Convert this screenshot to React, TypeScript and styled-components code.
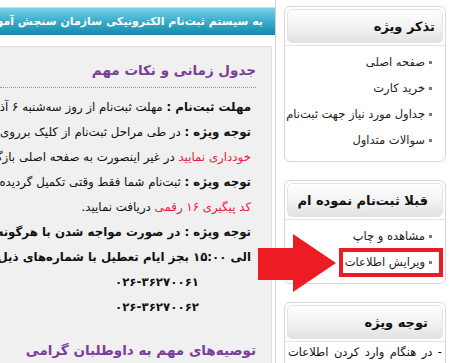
import React from 'react'
import { styled, createGlobalStyle } from 'styled-components'

const GlobalStyle = createGlobalStyle`
    html, body {
        margin: 0;
        padding: 0;
        background: #ffffff;
        overflow: hidden;
    }
    body {
        font-family: 'DejaVu Sans', sans-serif;
        color: #111;
    }
`

const Page = styled.div`
    position: relative;
    display: flex;
    align-items: flex-start;
    gap: 8px;
    width: 452px;
    height: 363px;
    overflow: hidden;
`

const MainColumn = styled.div`
    box-sizing: border-box;
    width: 276px;
    height: 363px;
    padding-top: 7px;
    border-right: 1px solid #d2d2d2;
    display: flex;
    flex-direction: column;
`

const WelcomeBar = styled.div`
    height: 28px;
    box-sizing: border-box;
    border-top: 1px solid #c9dfe6;
    background: linear-gradient(to bottom, #7ad2e6 0%, #3fb0cf 45%, #1588a8 100%);
    color: #ffffff;
    font-weight: bold;
    font-size: 11px;
    line-height: 27px;
    padding-right: 12px;
    direction: rtl;
    white-space: nowrap;
    overflow: hidden;
`

const ContentPanel = styled.div`
    flex: 1;
    margin-top: 11px;
    margin-right: 3px;
    background: #f0f0f0;
    border: 1px solid #dedede;
    border-left: none;
    border-bottom: none;
    padding: 13px 15px 0 0;
    direction: rtl;
    overflow: hidden;
`

const SectionTitle = styled.div<{ $divider?: boolean }>`
    color: #7b3d9b;
    font-weight: bold;
    font-size: 13.5px;
    line-height: 20px;
    white-space: nowrap;
    padding-bottom: ${p => (p.$divider ? '7px' : '0')};
    border-bottom: ${p => (p.$divider ? '1px dotted #9a9a9a' : 'none')};
`

const NoteList = styled.div`
    margin-top: 7px;
    padding-right: 5px;
`

const NoteLine = styled.div<{ $center?: boolean; $bold?: boolean }>`
    font-size: 11.8px;
    line-height: 25px;
    white-space: nowrap;
    color: #111;
    font-weight: ${p => (p.$bold ? 'bold' : 'normal')};
    text-align: ${p => (p.$center ? 'center' : 'right')};
    margin-left: ${p => (p.$center ? '63px' : '0')};
    b {
        font-weight: bold;
    }
`

const Red = styled.span`
    color: #ef1a3a;
`

const Spacer = styled.div`
    height: 20px;
`

const Sidebar = styled.div`
    width: 162px;
    padding-top: 6px;
    display: flex;
    flex-direction: column;
    gap: 18px;
`

const SideBox = styled.div`
    box-sizing: border-box;
    border: 1px solid #d8d8d8;
    border-radius: 6px;
    padding: 2px 2px 0 2px;
    background: #ffffff;
    direction: rtl;
`

const SideHeader = styled.div<{ $inset: number }>`
    height: 34px;
    box-sizing: border-box;
    border: 1px solid #e4e4e4;
    border-radius: 5px;
    background: linear-gradient(to bottom, #ffffff 0%, #f3f3f3 50%, #e2e2e2 100%);
    font-weight: bold;
    font-size: 13px;
    line-height: 33px;
    padding-right: ${p => p.$inset}px;
    color: #111;
    white-space: nowrap;
`

const LinkList = styled.ul<{ $bottom: number }>`
    list-style: none;
    margin: 2px -2px 0 -2px;
    padding: 3px 0 ${p => p.$bottom}px 0;
    border-top: 1px solid #e4e4e4;
`

const LinkItem = styled.li`
    display: flex;
    align-items: center;
    gap: 4px;
    padding-right: 13px;
    font-size: 11.5px;
    line-height: 26px;
    color: #222;
    white-space: nowrap;
    &::before {
        content: '';
        width: 3px;
        height: 3px;
        background: #7a7a7a;
        flex: none;
    }
`

const NoteText = styled.div`
    margin: 2px -2px 0 -2px;
    border-top: 1px solid #e4e4e4;
    padding: 1px 3px 0 3px;
    font-size: 11.5px;
    line-height: 18px;
    text-align: justify;
    text-align-last: justify;
    color: #111;
`

const Highlight = styled.div`
    position: absolute;
    left: 339px;
    top: 248px;
    width: 104px;
    height: 29px;
    box-sizing: border-box;
    border: 4px solid #ed1c24;
`

const Arrow = styled.svg`
    position: absolute;
    left: 258px;
    top: 233px;
`

export default function App() {
    return (
        <>
            <GlobalStyle />
            <Page>
                <MainColumn>
                    <WelcomeBar>به سیستم ثبت‌نام الکترونیکی سازمان سنجش آموزش کشور خوش آمدید</WelcomeBar>
                    <ContentPanel>
                        <SectionTitle $divider>جدول زمانی و نکات مهم</SectionTitle>
                        <NoteList>
                            <NoteLine>
                                <b>مهلت ثبت‌نام :</b> مهلت ثبت‌نام از روز سه‌شنبه ۶ آذر ماه آغاز می‌گردد
                            </NoteLine>
                            <NoteLine>
                                <b>توجه ویژه :</b> در طی مراحل ثبت‌نام از کلیک برروی دکمه بازگشت مرورگر
                            </NoteLine>
                            <NoteLine>
                                <Red>خودداری نمایید</Red> در غیر اینصورت به صفحه اصلی بازگشت داده می‌شوید
                            </NoteLine>
                            <NoteLine>
                                <b>توجه ویژه :</b> ثبت‌نام شما فقط وقتی تکمیل گردیده است که
                            </NoteLine>
                            <NoteLine>
                                <Red>کد پیگیری ۱۶ رقمی</Red> دریافت نمایید.
                            </NoteLine>
                            <NoteLine $bold>توجه ویژه : در صورت مواجه شدن با هرگونه مشکل از ساعت ۸:۰۰</NoteLine>
                            <NoteLine $bold>الی ۱۵:۰۰ بجز ایام تعطیل با شماره‌های ذیل تماس حاصل فرمایید</NoteLine>
                            <NoteLine $bold $center>
                                <bdi dir="ltr">۰۲۶-۳۶۲۷۰۰۶۱</bdi>
                            </NoteLine>
                            <NoteLine $bold $center>
                                <bdi dir="ltr">۰۲۶-۳۶۲۷۰۰۶۲</bdi>
                            </NoteLine>
                        </NoteList>
                        <Spacer />
                        <SectionTitle>توصیه‌های مهم به داوطلبان گرامی</SectionTitle>
                    </ContentPanel>
                </MainColumn>

                <Sidebar>
                    <SideBox>
                        <SideHeader $inset={7}>تذکر ویژه</SideHeader>
                        <LinkList $bottom={8}>
                            <LinkItem>صفحه اصلی</LinkItem>
                            <LinkItem>خرید کارت</LinkItem>
                            <LinkItem>جداول مورد نیاز جهت ثبت‌نام</LinkItem>
                            <LinkItem>سوالات متداول</LinkItem>
                        </LinkList>
                    </SideBox>
                    <SideBox>
                        <SideHeader $inset={14}>قبلا ثبت‌نام نموده ام</SideHeader>
                        <LinkList $bottom={8}>
                            <LinkItem>مشاهده و چاپ</LinkItem>
                            <LinkItem>ویرایش اطلاعات</LinkItem>
                        </LinkList>
                    </SideBox>
                    <SideBox>
                        <SideHeader $inset={14}>توجه ویژه</SideHeader>
                        <NoteText>
                            - در هنگام وارد کردن اطلاعات فایل مورد نظر را با دقت کامل بارگذاری نمایید
                        </NoteText>
                    </SideBox>
                </Sidebar>

                <Arrow width="80" height="60" viewBox="0 0 80 60">
                    <polygon points="0,15 35,15 35,1 78,30 35,59 35,47 0,47" fill="#ed1c24" />
                </Arrow>
                <Highlight />
            </Page>
        </>
    )
}
